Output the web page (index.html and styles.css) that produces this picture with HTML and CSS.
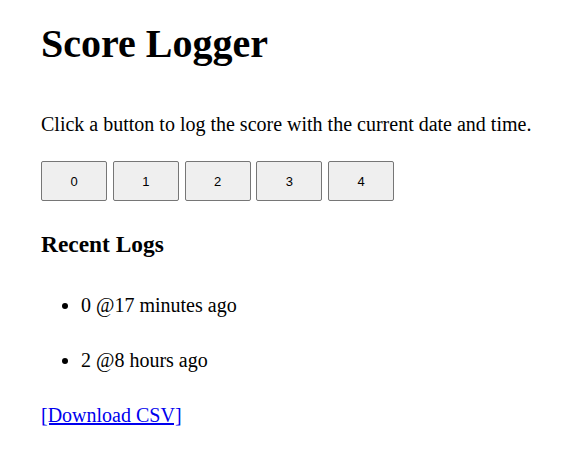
FILE: index.html
```html
<!DOCTYPE html>
<html>
<head>
<meta charset="utf-8">
<title>Score Logger</title>
<link rel="stylesheet" href="styles.css">
</head>
<body>
<h1 class="title">Score Logger</h1>
<p class="intro">Click a button to log the score with the current date and time.</p>
<div class="buttons">
<button class="score-btn">0</button><button class="score-btn">1</button><button class="score-btn">2</button><button class="score-btn">3</button><button class="score-btn">4</button>
</div>
<h3 class="logs-title">Recent Logs</h3>
<ul class="logs">
<li class="log">0 @17 minutes ago</li>
<li class="log">2 @8 hours ago</li>
</ul>
<a class="download" href="#">[Download CSV]</a>
</body>
</html>
```
FILE: styles.css
```css
body {
  margin: 0;
  padding: 0 41px;
  font-family: "Liberation Serif", "Times New Roman", serif;
  font-size: 20px;
  color: #000;
  background: #fff;
}
.title {
  font-size: 40px;
  margin: 20px 0 46px;
}
.intro {
  margin: 0 0 25px;
}
.buttons {
  display: flex;
  gap: 5.75px;
}
.score-btn {
  width: 66px;
  height: 40px;
  font-family: "Liberation Sans", Arial, sans-serif;
  font-size: 13px;
  background: #efefef;
  border: 1px solid #767676;
  border-radius: 2px;
  color: #000;
  padding: 0;
}
.logs-title {
  font-size: 23.4px;
  margin: 30px 0 0;
}
.logs {
  margin: 36px 0 0;
  padding-left: 40px;
}
.log {
  margin-bottom: 32px;
}
.download {
  color: #0000ee;
}
```
